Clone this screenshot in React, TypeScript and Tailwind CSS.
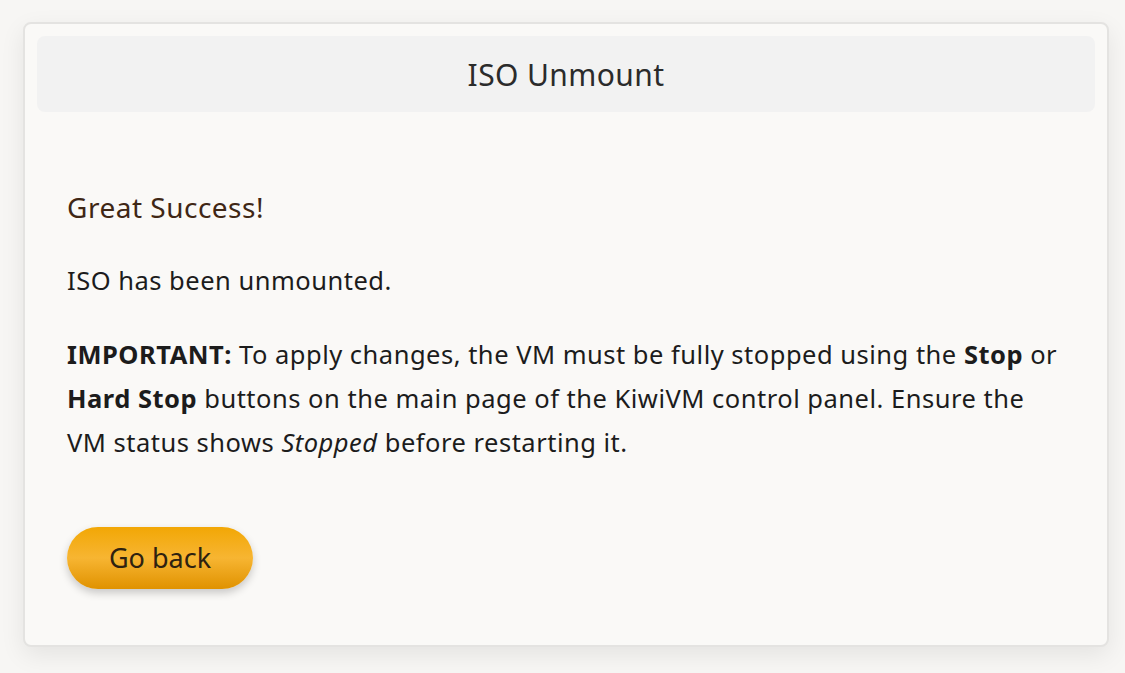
import React from "react";

const font = { fontFamily: '"Noto Sans", "Open Sans", sans-serif' };

export default function App() {
  return (
    <div className="min-h-[673px] w-full bg-[#f7f6f4] pl-[23px] pr-[16px] pt-[22px]" style={font}>
      <div className="rounded-[8px] border-2 border-[#e4e3e1] bg-[#faf9f7] p-3 pb-[56px] shadow-[0_8px_24px_rgba(0,0,0,0.08)]">
        <div className="flex h-[76px] items-center justify-center rounded-[8px] bg-[#f2f2f2]">
          <h1 className="text-[30px] tracking-[0.4px] font-normal text-[#2b2b2b]">ISO Unmount</h1>
        </div>
        <div className="px-[30px] pt-[78px]">
          <h2 className="text-[28px] tracking-[0.5px] leading-[34px] text-[#3f2715]">Great Success!</h2>
          <div className="text-[25.5px] tracking-[0.5px] leading-[44px] text-[#1c1c1c]">
            <p className="mt-[34px]">ISO has been unmounted.</p>
            <p className="mt-[30px]">
              <strong className="font-bold">IMPORTANT:</strong> To apply changes, the VM must be fully stopped using the{" "}
              <strong className="font-bold">Stop</strong> or <strong className="font-bold">Hard Stop</strong> buttons on
              the main page of the KiwiVM control panel. Ensure the VM status shows <em>Stopped</em> before restarting it.
            </p>
          </div>
          <button className="mt-[63px] h-[62px] w-[186px] rounded-full bg-[linear-gradient(180deg,#f2a705_0%,#f7b532_50%,#e09200_100%)] text-[27px] text-[#2e2210] shadow-[0_4px_8px_rgba(0,0,0,0.2)]">
            Go back
          </button>
        </div>
      </div>
    </div>
  );
}
